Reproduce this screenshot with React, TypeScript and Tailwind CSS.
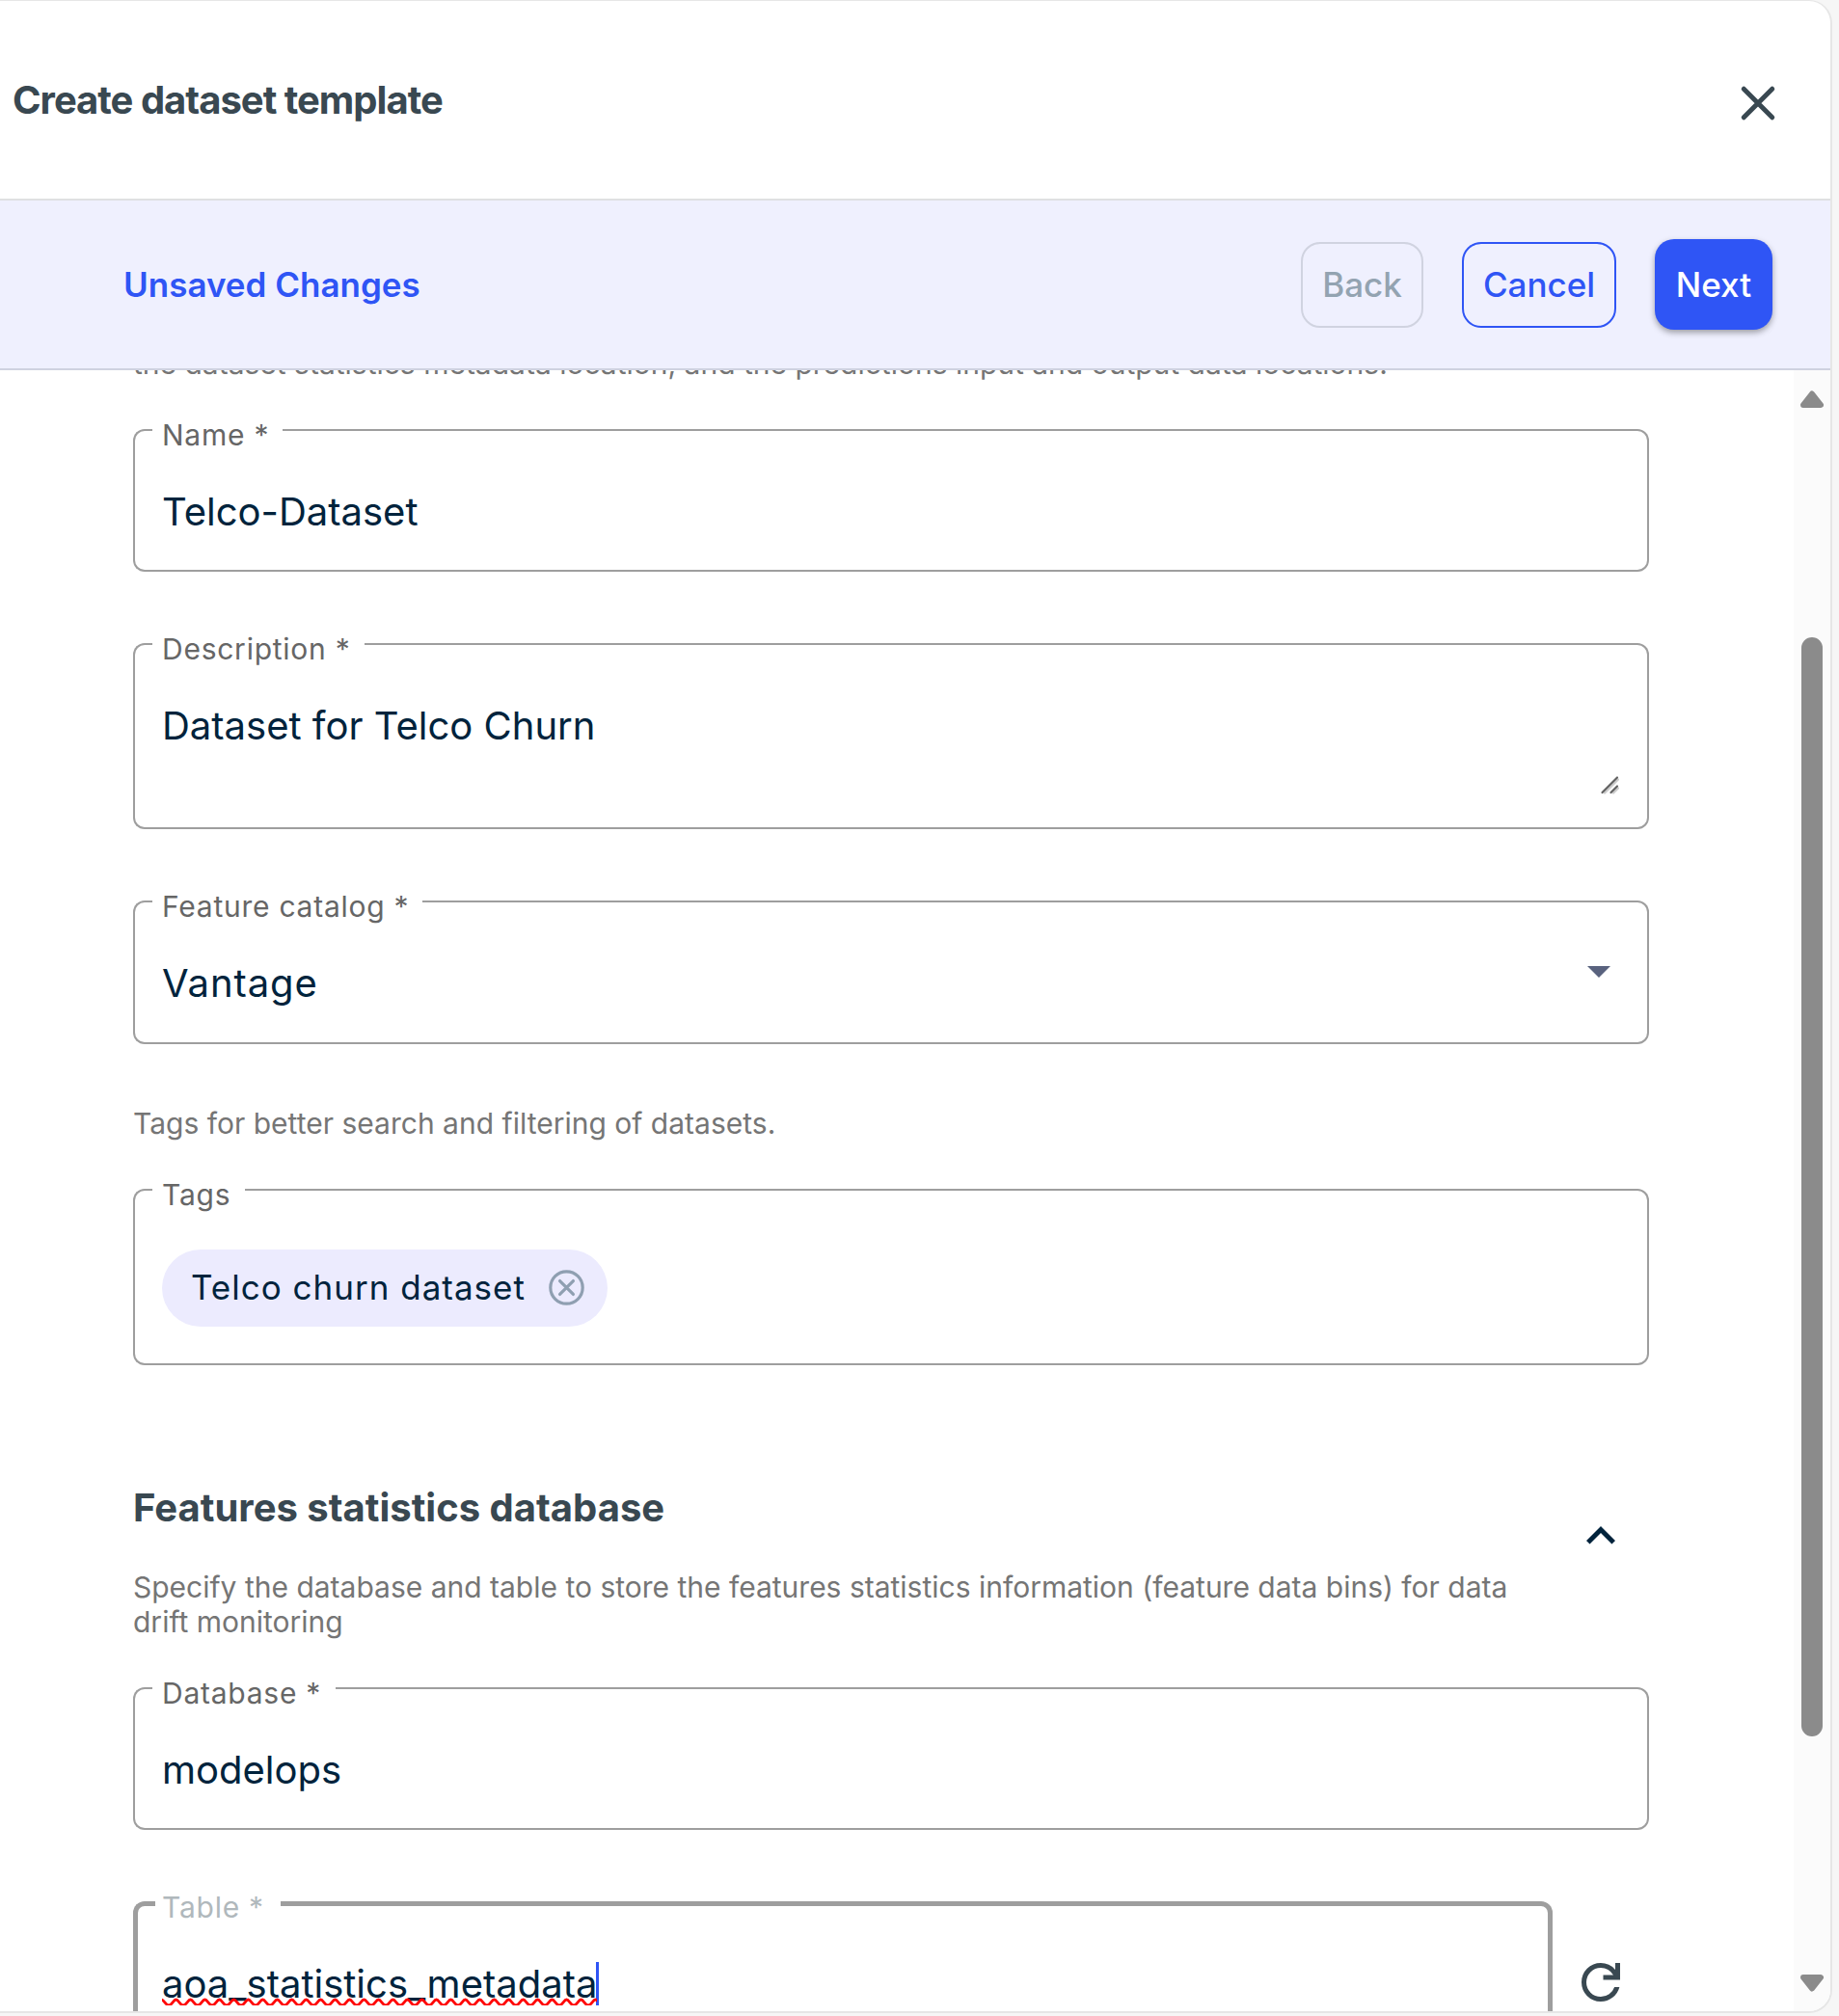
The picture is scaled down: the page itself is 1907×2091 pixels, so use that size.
import React, { type ReactNode } from 'react'

type FieldProps = {
  label: string
  notch: string
  height: string
  focused?: boolean
  children: ReactNode
}

function OutlinedField({ label, notch, height, focused = false, children }: FieldProps) {
  const edge = focused ? 'border-[#9e9e9e] border-y-[5px]' : 'border-[#9e9e9e] border-y-2'
  return (
    <div className={`relative w-full ${height}`}>
      <div className="pointer-events-none absolute inset-0 flex">
        <div
          className={`shrink-0 rounded-l-[12px] ${edge} ${focused ? 'w-[23px] border-l-[5px]' : 'w-5 border-l-2'}`}
        />
        <div
          className={`shrink-0 whitespace-nowrap border-[#9e9e9e] ${notch} ${
            focused ? 'border-b-[5px] pl-[7px] text-[#b0b8bc]' : 'border-b-2 pl-[10px] text-[#666666]'
          }`}
        >
          <span className="block -mt-[12px] text-[30px] leading-9 tracking-[0.75px]">{label}</span>
        </div>
        <div className={`grow rounded-r-[12px] ${edge} ${focused ? 'border-r-[5px]' : 'border-r-2'}`} />
      </div>
      {children}
    </div>
  )
}

function Value({ children }: { children: ReactNode }) {
  return (
    <div className="flex items-start pl-[30px] pt-[61px] text-[40px] leading-[50px] text-[#00233c]">{children}</div>
  )
}

// Spell-check squiggle: one wave every 15px.
const squiggle = 'M-.5 2' + Array.from({ length: 31 }, () => 'c2.5 0 4.5 6 7.5 6s5-6 7.5-6').join('')

export default function App() {
  return (
    <div className="h-[2091px] w-full overflow-hidden bg-[#f6f6f6] font-['Inter',sans-serif]">
      <div className="flex h-[2088px] w-[1900px] flex-col overflow-hidden rounded-r-[24px] border-b-2 border-r-2 border-t border-[#e6e6e6] bg-white">
        <header className="flex h-[207px] shrink-0 items-center justify-between border-b-2 border-[#dfe0e2] pl-[13px] pr-[45px]">
          <h1 className="text-[40px] font-bold leading-[50px] tracking-[-1px] text-[#394851]">
            Create dataset template
          </h1>
          <svg
            className="mt-1.5 size-[60px]"
            viewBox="0 0 24 24"
            stroke="#394851"
            strokeWidth="2"
            strokeLinecap="round"
          >
            <path d="m6.100 6.100 11.800 11.800M17.900 6.100 6.100 17.900" />
          </svg>
        </header>

        <div className="flex h-[176px] shrink-0 items-center justify-between border-b-2 border-[#cfd2e0] bg-[#eff0fe] pl-32 pr-[60px] text-[35px] font-medium leading-[44px]">
          <span className="font-semibold text-[#2f55f5]">Unsaved Changes</span>
          <div className="flex items-center gap-10">
            <button className="h-[89px] w-[127px] rounded-[20px] border-2 border-[#d0d3e0] text-[#93a3b1]">Back</button>
            <button className="h-[89px] w-[160px] rounded-[20px] border-2 border-[#2f55f5] text-[#2f55f5]">
              Cancel
            </button>
            <button className="h-[94px] w-[122px] rounded-[20px] bg-[#2f55f5] text-white shadow-[0_3px_6px_rgba(0,0,0,0.35)]">
              Next
            </button>
          </div>
        </div>

        <div className="flex min-h-0 grow">
          <main className="grow overflow-hidden pl-[138px] pr-[150px]">
            <div className="flex flex-col">
              <p className="-mt-[25px] whitespace-nowrap text-[30px] leading-9 text-[#757575]">
                the dataset statistics metadata location, and the predictions input and output data locations.
              </p>

              <div className="mt-[50px] flex flex-col gap-[74px]">
                <OutlinedField label="Name *" notch="w-[135px]" height="h-[148px]">
                  <Value>Telco-Dataset</Value>
                </OutlinedField>
                <OutlinedField label="Description *" notch="w-[220px]" height="h-[193px]">
                  <Value>Dataset for Telco Churn</Value>
                  <svg
                    className="absolute bottom-9 right-[31px] size-5"
                    viewBox="0 0 20 20"
                    stroke="#616161"
                    strokeWidth="2.200"
                    strokeLinecap="round"
                  >
                    <path stroke="#cccccc" d="M5 18.500 19 4.500M14 18.500l5-5" />
                    <path d="M2.500 18 18 2.500M11.500 18l6.500-6.500" />
                  </svg>
                </OutlinedField>
                <OutlinedField label="Feature catalog *" notch="w-[280px]" height="h-[149px]">
                  <Value>
                    <span className="tracking-[0.94px]">Vantage</span>
                  </Value>
                  <svg className="absolute right-[40px] top-[68px] h-3 w-6" viewBox="0 0 24 12" fill="#59627e">
                    <path d="M0 0h24L12 12z" />
                  </svg>
                </OutlinedField>
              </div>

              <p className="mt-16 text-[30px] leading-9 tracking-[0.01px] text-[#757575]">
                Tags for better search and filtering of datasets.
              </p>

              <div className="mt-[50px]">
                <OutlinedField label="Tags" notch="w-[96px]" height="h-[183px]">
                  <div className="flex pl-[30px] pt-[63px]">
                    <div className="flex h-20 w-[462px] items-center justify-between rounded-full bg-[#ecebfe] pb-0.5 pl-[30px] pr-[20px]">
                      <span className="text-[35px] leading-[44px] tracking-[1px] text-[#00233c]">
                        Telco churn dataset
                      </span>
                      <svg
                        className="size-[45px]"
                        viewBox="0 0 24 24"
                        fill="none"
                        stroke="#8f9fb1"
                        strokeWidth="1.7"
                        strokeLinecap="round"
                      >
                        <circle cx="12" cy="12" r="8.9" />
                        <path d="m8.300 8.300 7.400 7.400M15.700 8.300l-7.400 7.400" />
                      </svg>
                    </div>
                  </div>
                </OutlinedField>
              </div>

              <section className="mt-[123px] flex items-center justify-between pr-5">
                <div className="w-[1440px]">
                  <h2 className="text-[40px] font-bold leading-[50px] text-[#394851]">Features statistics database</h2>
                  <p className="mb-px mt-[39px] text-[30px] leading-9 text-[#757575]">
                    Specify the database and table to store the features statistics information (feature data bins) for
                    data drift monitoring
                  </p>
                </div>
                <svg className="-mt-[55px] size-[60px]" viewBox="0 0 24 24" fill="#00233c">
                  <path d="m12 8-6 6 1.41 1.41L12 10.83l4.59 4.58L18 14z" />
                </svg>
              </section>

              <div className="mt-[49px] flex flex-col gap-[74px]">
                <OutlinedField label="Database *" notch="w-[190px]" height="h-[148px]">
                  <Value>modelops</Value>
                </OutlinedField>
                <div className="flex items-center gap-5">
                  <div className="w-[1472px]">
                    <OutlinedField label="Table *" notch="w-[130px]" height="h-[148px]" focused>
                      <Value>
                        <span className="relative">
                          aoa_statistics_metadata
                          <svg
                            className="absolute left-0 top-[39px] h-2 w-full overflow-hidden"
                            fill="none"
                            stroke="#ff0000"
                            strokeWidth="2.800"
                          >
                            <path d={squiggle} />
                          </svg>
                        </span>
                        <span className="-ml-px mt-0.5 h-[45px] w-[3px] bg-[#2f55f5]" />
                      </Value>
                    </OutlinedField>
                  </div>
                  <svg className="mt-5 size-[60px]" viewBox="0 0 24 24" fill="#394851">
                    <path d="M12 20q-3.35 0-5.675-2.325T4 12t2.325-5.675T12 4q1.725 0 3.3.713T18 6.75V4h2v7h-7V9h4.2q-.8-1.4-2.187-2.2T12 6Q9.5 6 7.75 7.75T6 12t1.75 4.25T12 18q1.925 0 3.475-1.1T17.65 14h2.1q-.7 2.65-2.85 4.325T12 20Z" />
                  </svg>
                </div>
              </div>
            </div>
          </main>

          <aside className="flex w-[38px] shrink-0 flex-col items-center justify-between bg-[#fbfbfb] pb-[20px] pt-[21px]">
            <svg
              className="h-[18px] w-6"
              viewBox="0 0 24 18"
              fill="#8b8b8b"
              stroke="#8b8b8b"
              strokeWidth="6"
              strokeLinejoin="round"
            >
              <path d="M12 3.500 21 15H3z" />
            </svg>
            <div className="mb-[9px] h-[1140px] w-[22px] rounded-full bg-[#8b8b8b]" />
            <svg
              className="h-[18px] w-6"
              viewBox="0 0 24 18"
              fill="#8b8b8b"
              stroke="#8b8b8b"
              strokeWidth="6"
              strokeLinejoin="round"
            >
              <path d="M12 14.500 21 3H3z" />
            </svg>
          </aside>
        </div>
      </div>
    </div>
  )
}
